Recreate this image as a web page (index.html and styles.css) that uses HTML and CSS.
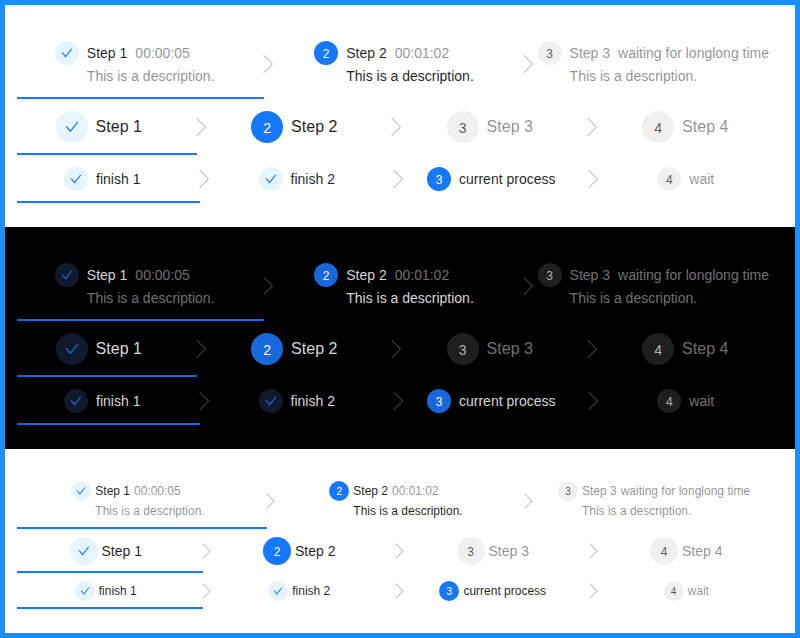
FILE: index.html
```html
<!DOCTYPE html>
<html lang="en">
<head>
<meta charset="utf-8">
<title>Navigation steps</title>
<link rel="stylesheet" href="styles.css">
</head>
<body>
<svg class="defs" aria-hidden="true">
  <symbol id="check" viewBox="64 64 896 896"><path d="M912 190h-69.9c-9.8 0-19.1 4.5-25.1 12.2L404.7 724.5 207 474a32 32 0 00-25.1-12.2H112c-6.7 0-10.4 7.7-6.3 12.9l273.9 347c12.8 16.2 37.4 16.2 50.3 0l488.4-618.9c4.1-5.1.4-12.8-6.3-12.8z"/></symbol>
</svg>
<main class="frame">
  <section class="panel">
    <div class="steps">
      <div class="step finish active"><div class="step-body"><span class="icon"><svg><use href="#check"/></svg></span><div class="text"><div class="title">Step 1<span class="subtitle">00:00:05</span></div><div class="desc">This is a description.</div></div></div></div>
      <div class="step process"><div class="step-body"><span class="icon">2</span><div class="text"><div class="title">Step 2<span class="subtitle">00:01:02</span></div><div class="desc">This is a description.</div></div></div></div>
      <div class="step wait"><div class="step-body"><span class="icon">3</span><div class="text"><div class="title">Step 3<span class="subtitle">waiting for longlong time</span></div><div class="desc">This is a description.</div></div></div></div>
    </div>
    <div class="steps large">
      <div class="step finish active"><div class="step-body"><span class="icon"><svg><use href="#check"/></svg></span><div class="title">Step 1</div></div></div>
      <div class="step process"><div class="step-body"><span class="icon">2</span><div class="title">Step 2</div></div></div>
      <div class="step wait"><div class="step-body"><span class="icon">3</span><div class="title">Step 3</div></div></div>
      <div class="step wait"><div class="step-body"><span class="icon">4</span><div class="title">Step 4</div></div></div>
    </div>
    <div class="steps">
      <div class="step finish active"><div class="step-body"><span class="icon"><svg><use href="#check"/></svg></span><div class="title">finish 1</div></div></div>
      <div class="step finish"><div class="step-body"><span class="icon"><svg><use href="#check"/></svg></span><div class="title">finish 2</div></div></div>
      <div class="step process"><div class="step-body"><span class="icon">3</span><div class="title">current process</div></div></div>
      <div class="step wait"><div class="step-body"><span class="icon">4</span><div class="title">wait</div></div></div>
    </div>
  </section>
  <section class="panel dark">
    <div class="steps">
      <div class="step finish active"><div class="step-body"><span class="icon"><svg><use href="#check"/></svg></span><div class="text"><div class="title">Step 1<span class="subtitle">00:00:05</span></div><div class="desc">This is a description.</div></div></div></div>
      <div class="step process"><div class="step-body"><span class="icon">2</span><div class="text"><div class="title">Step 2<span class="subtitle">00:01:02</span></div><div class="desc">This is a description.</div></div></div></div>
      <div class="step wait"><div class="step-body"><span class="icon">3</span><div class="text"><div class="title">Step 3<span class="subtitle">waiting for longlong time</span></div><div class="desc">This is a description.</div></div></div></div>
    </div>
    <div class="steps large">
      <div class="step finish active"><div class="step-body"><span class="icon"><svg><use href="#check"/></svg></span><div class="title">Step 1</div></div></div>
      <div class="step process"><div class="step-body"><span class="icon">2</span><div class="title">Step 2</div></div></div>
      <div class="step wait"><div class="step-body"><span class="icon">3</span><div class="title">Step 3</div></div></div>
      <div class="step wait"><div class="step-body"><span class="icon">4</span><div class="title">Step 4</div></div></div>
    </div>
    <div class="steps">
      <div class="step finish active"><div class="step-body"><span class="icon"><svg><use href="#check"/></svg></span><div class="title">finish 1</div></div></div>
      <div class="step finish"><div class="step-body"><span class="icon"><svg><use href="#check"/></svg></span><div class="title">finish 2</div></div></div>
      <div class="step process"><div class="step-body"><span class="icon">3</span><div class="title">current process</div></div></div>
      <div class="step wait"><div class="step-body"><span class="icon">4</span><div class="title">wait</div></div></div>
    </div>
  </section>
  <section class="panel compact">
    <div class="steps">
      <div class="step finish active"><div class="step-body"><span class="icon"><svg><use href="#check"/></svg></span><div class="text"><div class="title">Step 1<span class="subtitle">00:00:05</span></div><div class="desc">This is a description.</div></div></div></div>
      <div class="step process"><div class="step-body"><span class="icon">2</span><div class="text"><div class="title">Step 2<span class="subtitle">00:01:02</span></div><div class="desc">This is a description.</div></div></div></div>
      <div class="step wait"><div class="step-body"><span class="icon">3</span><div class="text"><div class="title">Step 3<span class="subtitle">waiting for longlong time</span></div><div class="desc">This is a description.</div></div></div></div>
    </div>
    <div class="steps large">
      <div class="step finish active"><div class="step-body"><span class="icon"><svg><use href="#check"/></svg></span><div class="title">Step 1</div></div></div>
      <div class="step process"><div class="step-body"><span class="icon">2</span><div class="title">Step 2</div></div></div>
      <div class="step wait"><div class="step-body"><span class="icon">3</span><div class="title">Step 3</div></div></div>
      <div class="step wait"><div class="step-body"><span class="icon">4</span><div class="title">Step 4</div></div></div>
    </div>
    <div class="steps">
      <div class="step finish active"><div class="step-body"><span class="icon"><svg><use href="#check"/></svg></span><div class="title">finish 1</div></div></div>
      <div class="step finish"><div class="step-body"><span class="icon"><svg><use href="#check"/></svg></span><div class="title">finish 2</div></div></div>
      <div class="step process"><div class="step-body"><span class="icon">3</span><div class="title">current process</div></div></div>
      <div class="step wait"><div class="step-body"><span class="icon">4</span><div class="title">wait</div></div></div>
    </div>
  </section>
</main>
</body>
</html>
```
FILE: styles.css
```css
* { box-sizing: border-box; }

body {
  margin: 0;
  font-family: "Liberation Sans", Arial, sans-serif;
  font-size: 14px;
}

.defs { display: none; }

.frame {
  width: 800px;
  height: 638px;
  border: 5px solid #1890ff;
}

.panel {
  --bg: #fff;
  --primary: #1677ff;
  --primary-bg: #e6f4ff;
  --text: rgba(0, 0, 0, 0.88);
  --muted: rgba(0, 0, 0, 0.45);
  --icon-text: rgba(0, 0, 0, 0.65);
  --fill: rgba(0, 0, 0, 0.06);
  --arrow: rgba(0, 0, 0, 0.25);
  --pad: 12px;
  --gap: 8px;
  --arrow-size: 12px;
  padding: 24px 12px;
  background: var(--bg);
}

.dark {
  --bg: #000;
  --primary: #1668dc;
  --primary-bg: #111a2c;
  --text: rgba(255, 255, 255, 0.85);
  --muted: rgba(255, 255, 255, 0.45);
  --icon-text: rgba(255, 255, 255, 0.65);
  --fill: rgba(255, 255, 255, 0.12);
  --arrow: rgba(255, 255, 255, 0.25);
}

.compact {
  --pad: 8px;
  --gap: 4px;
  --arrow-size: 10px;
}

.steps {
  --icon: 24px;
  --icon-font: 12px;
  --title-font: 14px;
  --desc-line: 22px;
  --indent: var(--pad);
  display: flex;
  padding-top: var(--pad);
}

.large {
  --icon: 32px;
  --icon-font: 14px;
  --title-font: 16px;
  --indent: 16px;
}

.compact .steps {
  --icon: 20px;
  --icon-font: 10px;
  --title-font: 12px;
  --desc-line: 20px;
}

.compact .large {
  --icon: 28px;
  --icon-font: 12px;
  --title-font: 14px;
  --indent: 8px;
}

.step {
  position: relative;
  display: flex;
  justify-content: center;
  flex: 1;
  min-width: 0;
  padding-bottom: var(--pad);
}

.step + .step { padding-left: var(--indent); }

.step-body {
  display: flex;
  gap: var(--gap);
  margin-left: calc(0px - var(--indent));
  white-space: nowrap;
}

.step:not(:last-child)::after {
  content: "";
  position: absolute;
  top: calc(50% - var(--pad) / 2);
  left: 100%;
  width: var(--arrow-size);
  height: var(--arrow-size);
  border: 1px solid var(--arrow);
  border-bottom: none;
  border-left: none;
  transform: translateY(-50%) translateX(-50%) rotate(45deg);
}

.active::before {
  content: "";
  position: absolute;
  bottom: 0;
  left: 0;
  width: 100%;
  height: 2px;
  background: var(--primary);
}

.icon {
  display: flex;
  align-items: center;
  justify-content: center;
  flex: none;
  width: var(--icon);
  height: var(--icon);
  border-radius: 50%;
  font-size: var(--icon-font);
  line-height: var(--icon);
}

.icon svg {
  width: 1em;
  height: 1em;
  fill: currentColor;
}

.process .icon,
.wait .icon { padding-top: 2px; }

.finish .icon { background: var(--primary-bg); color: var(--primary); }
.process .icon { background: var(--primary); color: #fff; }
.wait .icon { background: var(--fill); color: var(--icon-text); }

.title {
  color: var(--text);
  font-size: var(--title-font);
  line-height: var(--icon);
}

.subtitle {
  margin-left: var(--gap);
  color: var(--muted);
}

.desc {
  color: var(--muted);
  font-size: var(--title-font);
  line-height: var(--desc-line);
}

.process .desc { color: var(--text); }
.wait .title { color: var(--muted); }
```
